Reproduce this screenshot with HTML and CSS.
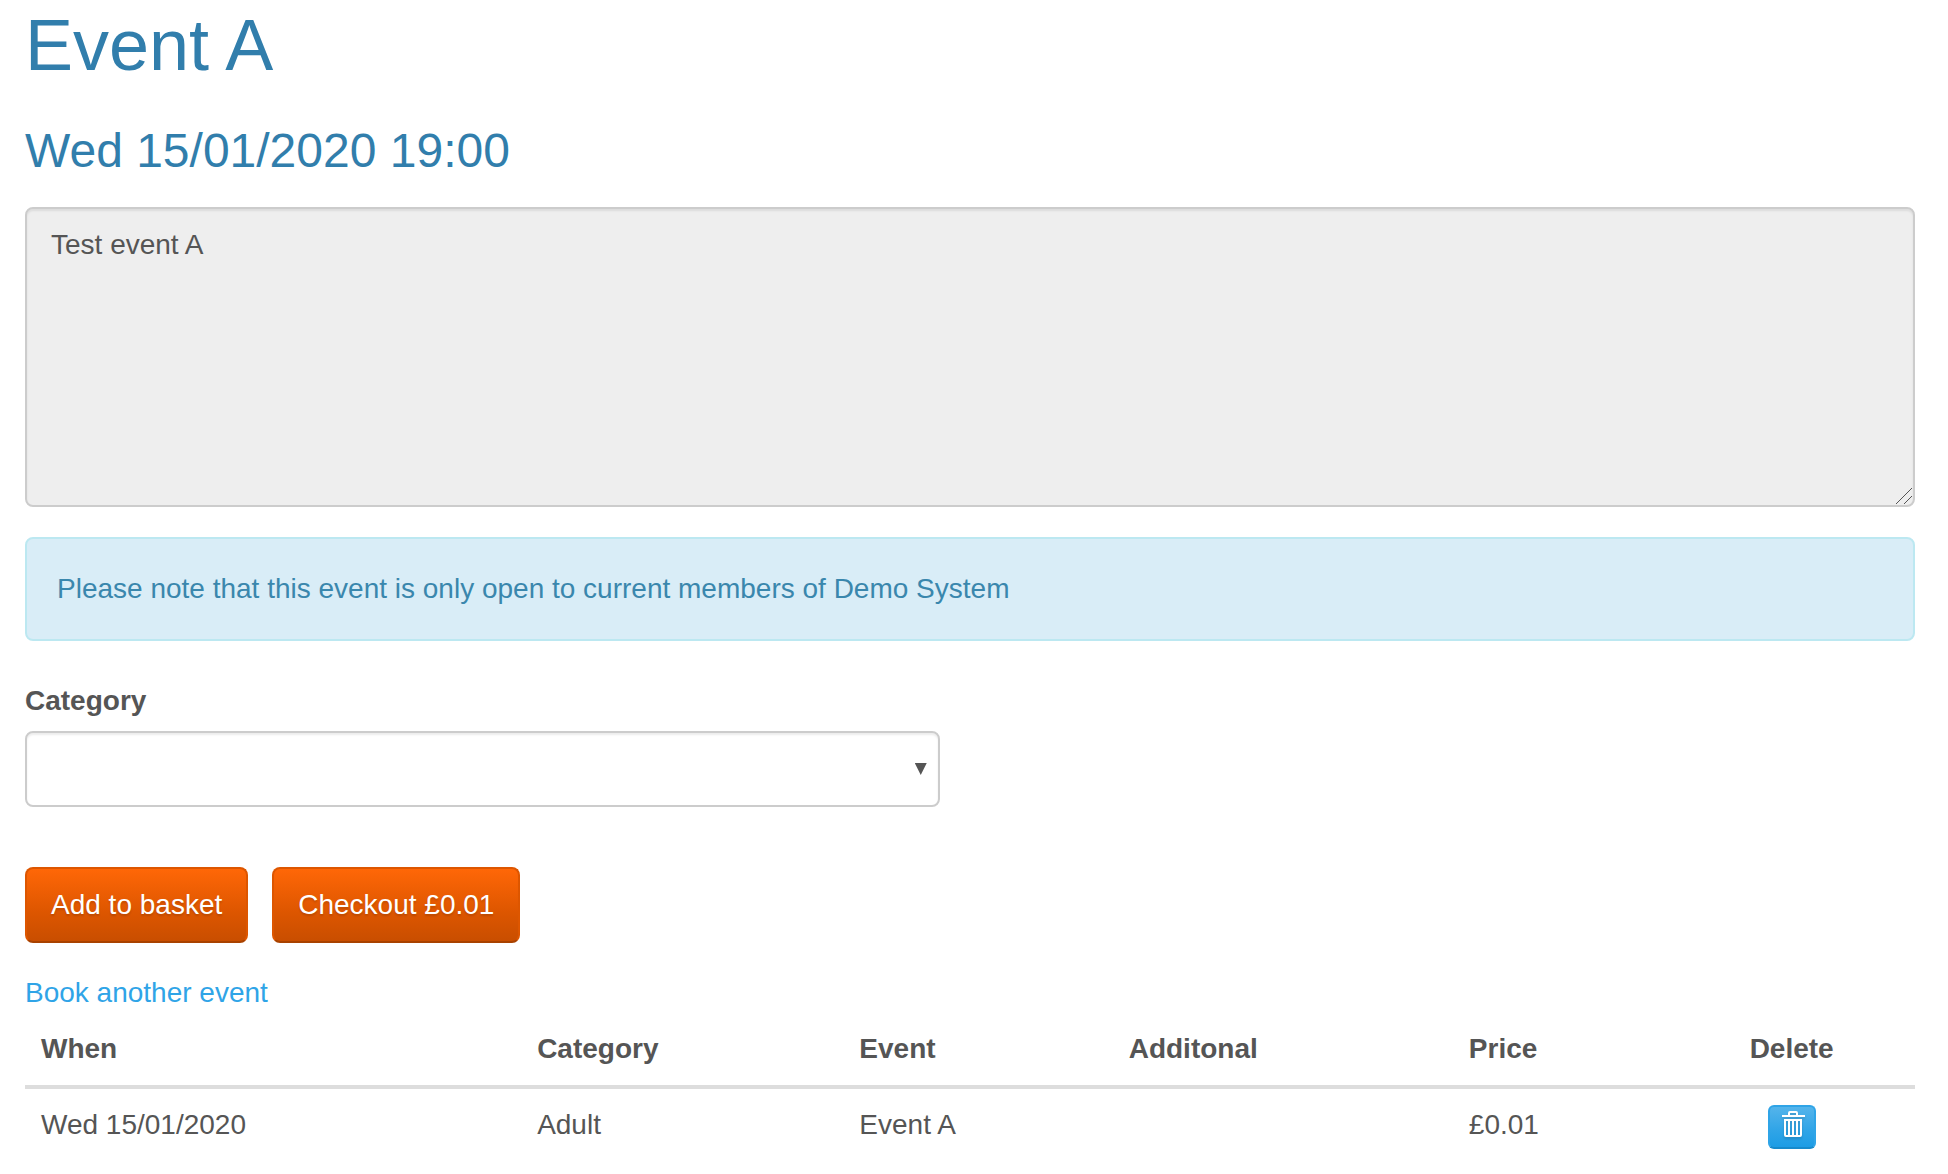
FILE: index.html
```html
<!DOCTYPE html>
<html lang="en">
<head>
<meta charset="UTF-8" />
<meta name="viewport" content="width=device-width, initial-scale=1" />
<title>Event A</title>
<link rel="stylesheet" href="styles.css">
</head>
<body>

<main class="container">
  <h1>Event A</h1>
  <h2>Wed 15/01/2020 19:00</h2>

  <div class="description">
    <textarea class="form-control" aria-label="Event description" readonly>Test event A</textarea>
    <svg class="grip" width="16" height="16" viewBox="0 0 16 16" shape-rendering="crispEdges" aria-hidden="true">
      <path d="M0 16L16 0M8 16L16 8" fill="none" stroke="#555" />
    </svg>
  </div>

  <div class="alert">Please note that this event is only open to current members of Demo System</div>

  <form class="booking">
    <label for="category">Category</label>
    <div class="select-wrap">
      <select id="category" class="form-control">
        <option value=""></option>
        <option value="adult">Adult</option>
      </select>
    </div>
    <div class="buttons">
      <button type="button" class="btn btn-warning">Add to basket</button>
      <button type="button" class="btn btn-warning">Checkout £0.01</button>
    </div>
  </form>

  <a class="another" href="#">Book another event</a>

  <table>
    <colgroup>
      <col class="col-when">
      <col class="col-category">
      <col class="col-event">
      <col class="col-additional">
      <col class="col-price">
      <col class="col-delete">
    </colgroup>
    <thead>
      <tr>
        <th>When</th>
        <th>Category</th>
        <th>Event</th>
        <th>Additonal</th>
        <th>Price</th>
        <th class="center">Delete</th>
      </tr>
    </thead>
    <tbody>
      <tr>
        <td>Wed 15/01/2020</td>
        <td>Adult</td>
        <td>Event A</td>
        <td></td>
        <td>£0.01</td>
        <td class="center">
          <button type="button" class="btn btn-primary btn-xs" aria-label="Delete">
            <svg width="24" height="28" viewBox="0 0 24 28" aria-hidden="true">
              <path d="M1 4h23v2H1zM7 4V2q0-2 2-2h6q2 0 2 2v2h-2V2H9v2z" fill="#fff" />
              <path d="M3 8h18v16q0 2-2 2H5q-2 0-2-2zM5 10v14h2V10zM9 10v14h2V10zM13 10v14h2V10zM17 10v14h2V10z" fill="#fff" fill-rule="evenodd" />
            </svg>
          </button>
        </td>
      </tr>
    </tbody>
  </table>
</main>

</body>
</html>
```

FILE: styles.css
```css
* {
  box-sizing: border-box;
}
body {
  margin: 0;
  background: #fff;
  color: #555;
  font-family: "Liberation Sans", Arial, sans-serif;
  font-size: 28px;
  line-height: 40px;
}
.container {
  padding: 5px 33px 0 25px;
}
h1, h2 {
  margin: 0;
  color: #317eac;
  font-weight: 500;
}
h1 {
  margin-bottom: 40px;
  font-size: 72px;
  line-height: 80px;
}
h2 {
  margin-bottom: 30px;
  font-size: 48px;
  line-height: 52px;
}
.form-control {
  display: block;
  width: 100%;
  padding: 16px 24px;
  border: 2px solid #ccc;
  border-radius: 8px;
  background: #fff;
  box-shadow: inset 0 2px 2px rgba(0,0,0,0.075);
  color: #555;
  font: inherit;
}
.description {
  position: relative;
  margin-bottom: 30px;
}
textarea.form-control {
  height: 300px;
  background: #eee;
  resize: none;
}
.grip {
  position: absolute;
  right: 3px;
  bottom: 3px;
}
.alert {
  margin-bottom: 40px;
  padding: 30px;
  border: 2px solid #bce8f1;
  border-radius: 8px;
  background: #d9edf7;
  color: #3a87ad;
}
label {
  display: block;
  margin-bottom: 10px;
  font-weight: bold;
}
.select-wrap {
  position: relative;
  width: 48.4%;
  margin-bottom: 60px;
}
select.form-control {
  height: 76px;
  appearance: none;
}
/* drop-down arrow */
.select-wrap::after {
  content: "";
  position: absolute;
  top: 32px;
  right: 13px;
  width: 12px;
  height: 12px;
  background: #555;
  clip-path: polygon(0 0, 100% 0, 50% 100%);
  pointer-events: none;
}
.buttons {
  display: flex;
  gap: 24px;
  margin-bottom: 30px;
}
.btn {
  padding: 16px 24px;
  border: 2px solid;
  border-radius: 8px;
  color: #fff;
  font: inherit;
  text-shadow: 0 2px 2px rgba(0,0,0,0.15);
  cursor: pointer;
}
.btn-warning {
  border-color: #dd5600 #dd5600 #a94200;
  background: linear-gradient(#ff6707, #dd5600 60%, #c94e00) no-repeat;
}
.btn-primary {
  border-color: #2fa4e7 #2fa4e7 #178acc;
  background: linear-gradient(#54b4eb, #2fa4e7 60%, #1d9ce5) no-repeat;
}
.btn-xs {
  display: block;
  height: 44px;
  margin: 0 auto;
  padding: 4px 9px 8px 11px;
  border-radius: 6px;
}
.btn-xs svg {
  display: block;
  filter: drop-shadow(0 2px 1px rgba(0,0,0,0.15));
}
a {
  color: #2fa4e7;
  text-decoration: none;
}
.another {
  display: block;
}
table {
  width: 100%;
  border-collapse: separate;
  border-spacing: 0;
  table-layout: fixed;
}
th, td {
  padding: 16px;
  text-align: left;
  vertical-align: top;
}
th {
  border-bottom: 4px solid #ddd;
}
.center {
  text-align: center;
}
.col-when {
  width: 26.25%;
}
.col-category {
  width: 17.05%;
}
.col-event {
  width: 14.25%;
}
.col-additional {
  width: 18%;
}
.col-price {
  width: 11.4%;
}
.col-delete {
  width: 13.05%;
}
```
